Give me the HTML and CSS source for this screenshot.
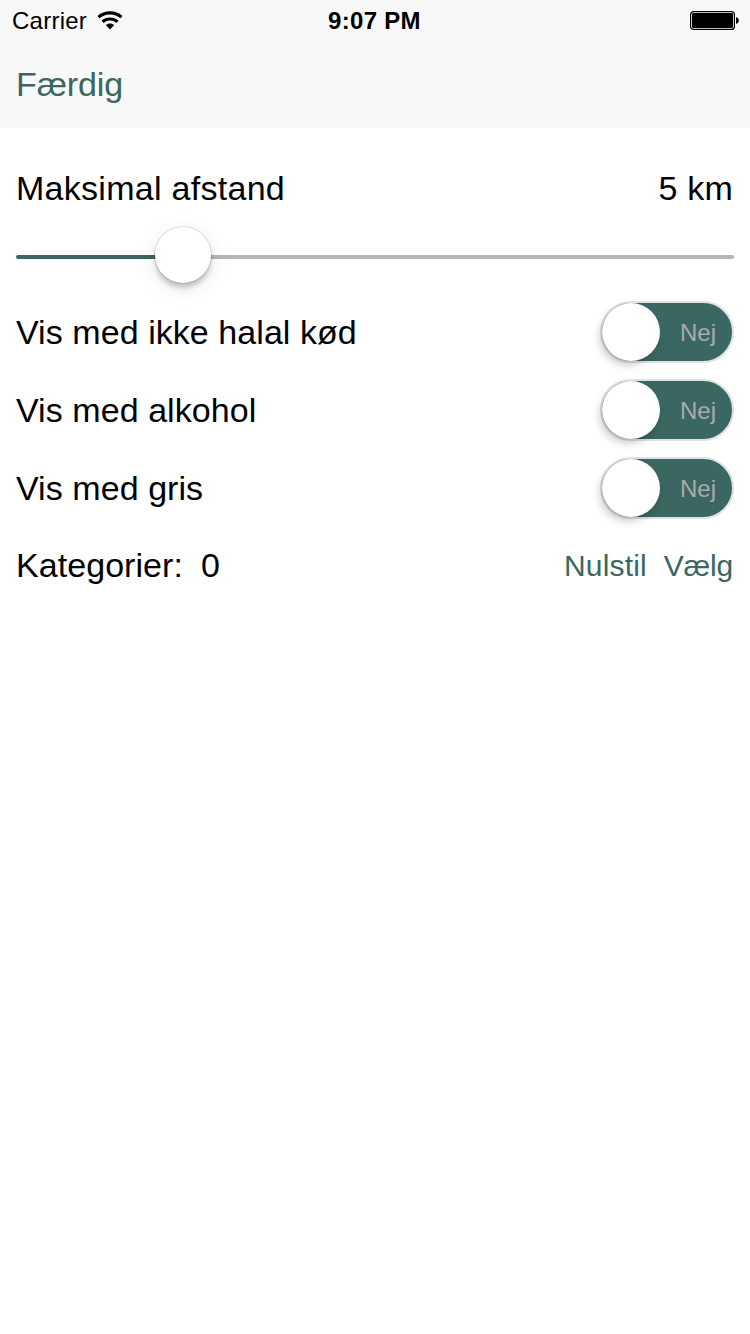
FILE: index.html
```html
<!DOCTYPE html>
<html lang="da">
<head>
<meta charset="utf-8">
<title>Filter</title>
<link rel="stylesheet" href="styles.css">
</head>
<body>
<header class="header">
  <div class="status">
    <div class="status-left">
      <span class="carrier">Carrier</span>
      <svg class="wifi" width="26" height="20" viewBox="0 0 26 20">
        <g fill="none" stroke="#000" stroke-width="3.2">
          <path d="M1.5 6.1C8 .5 18 .5 24.5 6.1"/>
          <path d="M5.5 10.7C9.7 7.1 16.3 7.1 20.5 10.7"/>
        </g>
        <path d="M13 18.5L8.8 14.1C11.2 11.8 14.8 11.8 17.2 14.1Z"/>
      </svg>
    </div>
    <span class="time">9:07 PM</span>
    <div class="status-right">
      <svg class="battery" width="50" height="20" viewBox="0 0 50 20">
        <rect x=".6" y=".6" width="43.8" height="17.8" rx="3" fill="#fff" stroke="#000" stroke-width="1.2"/>
        <rect x="2" y="2" width="41" height="15" rx="1.2"/>
        <path d="M46 6.2C49.7 6.2 49.7 12.8 46 12.8Z"/>
      </svg>
    </div>
  </div>
  <nav class="nav"><a class="done">Færdig</a></nav>
</header>
<main class="content">
  <div class="row row-distance"><span class="label label-distance">Maksimal afstand</span><span class="value">5 km</span></div>
  <div class="slider">
    <div class="track-filled"></div>
    <div class="thumb"></div>
    <div class="track-empty"></div>
  </div>
  <div class="row"><span class="label">Vis med ikke halal kød</span><div class="switch"><span class="knob"></span><span class="state">Nej</span></div></div>
  <div class="row"><span class="label">Vis med alkohol</span><div class="switch"><span class="knob"></span><span class="state">Nej</span></div></div>
  <div class="row"><span class="label">Vis med gris</span><div class="switch"><span class="knob"></span><span class="state">Nej</span></div></div>
  <div class="row row-categories">
    <div class="categories"><span class="label">Kategorier:</span><span class="label">0</span></div>
    <div class="links"><a class="link-reset">Nulstil</a><a class="link-choose">Vælg</a></div>
  </div>
</main>
</body>
</html>
```
FILE: styles.css
```css
* { box-sizing: border-box; }
body {
  margin: 0;
  height: 1334px;
  background: #fff;
  color: #000;
  font-family: "Liberation Sans", Arial, sans-serif;
  font-size: 34px;
  line-height: 40px;
  white-space: nowrap;
}
.header { height: 128px; background: #f8f8f8; }
.status {
  display: grid;
  grid-template-columns: 1fr auto 1fr;
  align-items: center;
  height: 42px;
  padding: 0 10px 0 12px;
  font-size: 24px;
}
.status-left { display: flex; align-items: center; gap: 10px; }
.carrier { letter-spacing: 0.25px; }
.wifi { display: block; }
.time { font-weight: bold; letter-spacing: 0.3px; padding-right: 3px; }
.status-right { display: flex; justify-content: flex-end; }
.battery { display: block; }
.nav { display: flex; align-items: center; height: 86px; padding: 0 16px 2px; color: #3a6761; }
.done { letter-spacing: -0.1px; }
.content { padding: 32px 16px 0; }
.row { display: flex; align-items: center; justify-content: space-between; height: 78px; }
.row-distance { height: 56px; }
.label { letter-spacing: 0.06px; }
.label-distance { letter-spacing: 0.28px; }
.value { letter-spacing: 0.2px; padding-right: 1px; }
.slider { display: flex; align-items: center; height: 77px; padding-top: 5px; }
.track-filled { width: 143px; height: 4px; border-radius: 2px; background: #3a6761; }
.track-empty { flex: 1; height: 4px; margin-left: -4px; border-radius: 2px; background: #b6b6b6; }
.thumb {
  position: relative;
  z-index: 1;
  flex: none;
  width: 56px;
  height: 56px;
  margin: 0 0 4px -4px;
  border-radius: 50%;
  background: #fff;
  box-shadow: 0 0 0 1px rgba(0,0,0,.1), 0 5px 5px rgba(0,0,0,.2), 0 5px 24px rgba(0,0,0,.09);
}
.switch {
  display: flex;
  align-items: center;
  justify-content: space-between;
  width: 134px;
  height: 62px;
  padding-right: 16px;
  border: 2px solid #dfe1e5;
  border-radius: 31px;
  background: #3a6761;
}
.knob {
  width: 58px;
  height: 58px;
  border-radius: 50%;
  background: #fff;
  box-shadow: -3px 5px 8px -1px rgba(0,0,0,.22);
}
.state { padding-top: 2px; color: #aaa; font-size: 24px; }
.row-categories { height: 76px; }
.categories { display: flex; gap: 18px; }
.links { display: flex; gap: 17px; padding: 2px 1px 0 0; color: #3a6761; font-size: 30px; }
.link-reset { letter-spacing: 0.15px; }
.link-choose { letter-spacing: -0.2px; }
```
